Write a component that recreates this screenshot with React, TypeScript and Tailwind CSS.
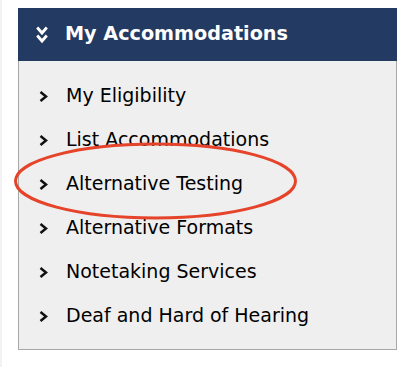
import { ReactNode } from "react";

const items = [
  "My Eligibility",
  "List Accommodations",
  "Alternative Testing",
  "Alternative Formats",
  "Notetaking Services",
  "Deaf and Hard of Hearing",
];

function DoubleChevron() {
  return (
    <svg width="12" height="18" viewBox="0 0 12 18" className="shrink-0">
      <polyline points="1.2,1.5 6,7 10.8,1.5" fill="none" stroke="#fff" strokeWidth="2.8" />
      <polyline points="1.2,9.5 6,15 10.8,9.5" fill="none" stroke="#fff" strokeWidth="2.8" />
    </svg>
  );
}

function Chevron() {
  return (
    <svg width="9" height="11" viewBox="0 0 9 11" className="shrink-0">
      <polyline points="1.5,1 7,5.5 1.5,10" fill="none" stroke="#111" strokeWidth="2.5" />
    </svg>
  );
}

function MenuItem({ children }: { children: ReactNode }) {
  return (
    <li className="flex h-[44px] items-center">
      <span className="flex w-[47px] justify-end pr-[18px] pt-[2px]">
        <Chevron />
      </span>
      <span className="leading-[44px]">{children}</span>
    </li>
  );
}

export default function App() {
  return (
    <div
      className="relative h-[367px] w-[409px] overflow-hidden border-l-2 border-[#f2f2f2] bg-white"
      style={{ fontFamily: '"DejaVu Sans", Verdana, sans-serif' }}
    >
      <div className="ml-[16px] mt-[8px] w-[379px]">
        <div className="flex h-[53px] items-center bg-[#233a62] pl-[18px] text-white">
          <span className="pt-[1px]">
            <DoubleChevron />
          </span>
          <h2 className="ml-[17px] text-[19.2px] font-bold">My Accommodations</h2>
        </div>
        <ul className="h-[289px] border-x border-b border-[#a8a8a8] bg-[#efefef] pt-[12px] text-[19px] text-black">
          {items.map((item) => (
            <MenuItem key={item}>{item}</MenuItem>
          ))}
        </ul>
      </div>
      <svg
        className="pointer-events-none absolute left-0 top-0"
        width="409"
        height="367"
        viewBox="0 0 409 367"
      >
        <ellipse cx="153.5" cy="181" rx="140" ry="37" fill="none" stroke="#e5432a" strokeWidth="3" />
      </svg>
    </div>
  );
}
